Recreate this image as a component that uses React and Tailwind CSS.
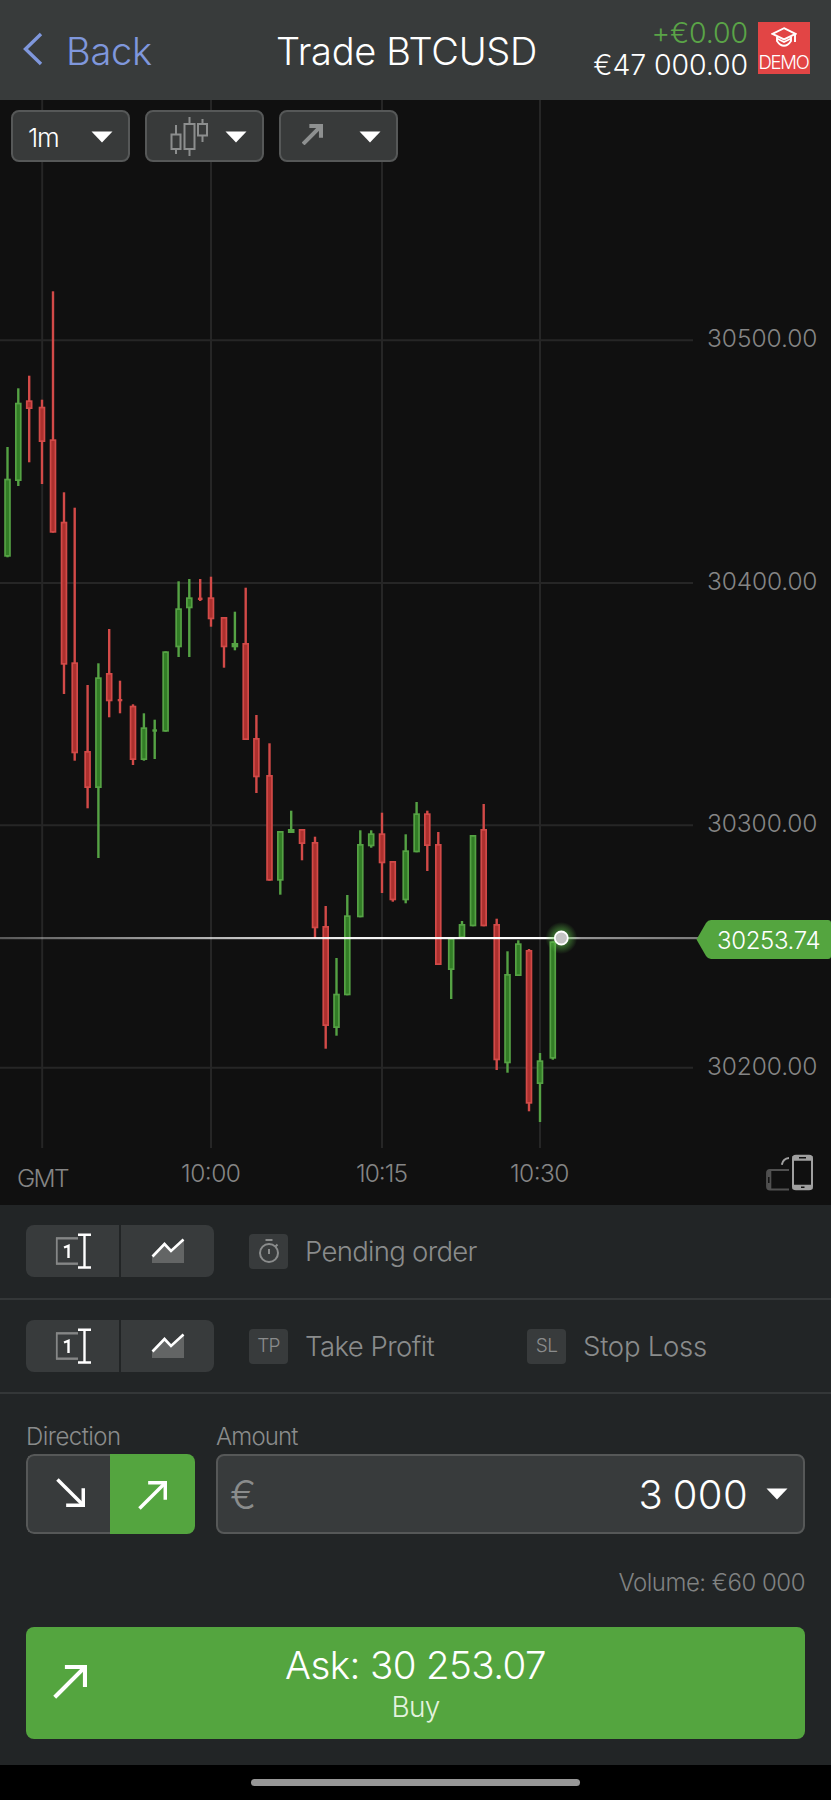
import React from "react";

// x, high, body top, body bottom, low, rising, narrow body
const CANDLES = [
  [7.5, 447, 478.7, 556.7, 557.3, 1],
  [18.3, 388.3, 402.7, 481, 486, 1],
  [29.2, 375.7, 400.3, 409, 462.3, 0],
  [42, 399.7, 406.7, 442, 484, 0],
  [53, 291.3, 439.3, 532.7, 532.7, 0],
  [64, 492.3, 521.7, 664.7, 694, 0],
  [74.7, 507.7, 662.3, 753.3, 760.7, 0],
  [87.6, 685, 751, 788, 808.3, 0],
  [98.4, 663.3, 677.3, 788, 858, 1],
  [109.2, 629, 673, 701.3, 717.3, 0],
  [120, 680.7, 699, 701.3, 713.3, 0, 1],
  [133, 704.3, 705.7, 760, 765, 0],
  [143.9, 713.3, 727.3, 760, 760.7, 1],
  [154.7, 719.7, 729.3, 731.7, 759, 1, 1],
  [165.6, 651.3, 651.3, 731.7, 731.7, 1],
  [178.6, 581.3, 608.3, 647.3, 657, 1],
  [189.3, 579, 597.3, 608.3, 657, 1],
  [200.2, 579, 597.6, 600, 601, 0, 1],
  [211, 576.7, 597.3, 619.3, 626.7, 0],
  [224, 617, 617, 647.3, 667.7, 0],
  [234.9, 611.7, 643, 647.3, 650.3, 1],
  [245.7, 587.7, 643, 740, 740, 0],
  [256.4, 715, 738, 777.3, 793, 0],
  [269.5, 743.3, 775, 880.7, 880.7, 0],
  [280.3, 831, 831, 880.7, 894.7, 1],
  [291.2, 810.7, 829, 833, 833, 1],
  [302, 829, 829, 844, 860.3, 0],
  [315, 836.7, 842, 928.3, 938, 0],
  [325.7, 906, 926, 1026, 1048.7, 0],
  [336.5, 958, 993.7, 1028, 1035.7, 1],
  [347.3, 895, 915.3, 995.3, 995.3, 1],
  [360.3, 830.3, 844, 917.3, 917.3, 1],
  [371.2, 830.3, 833.3, 846.3, 847.7, 1],
  [382, 812.7, 833.3, 863.3, 893, 0],
  [392.8, 861, 861, 900.3, 901.7, 0],
  [405.7, 834.3, 850.3, 900.3, 903.3, 1],
  [416.6, 802, 813.3, 852.3, 852.3, 1],
  [427.3, 810.7, 813.3, 846, 871, 0],
  [438.3, 832, 844, 965, 965, 0],
  [451.2, 938, 938, 970, 999, 1],
  [462, 921, 924, 938, 938, 1],
  [473, 835, 835, 926.3, 926.3, 1],
  [483.7, 804, 829, 926.3, 926.3, 0],
  [496.7, 918.7, 924, 1060.3, 1070, 0],
  [507.5, 951.3, 974, 1063.3, 1072.7, 1],
  [518.3, 940.3, 943.3, 976, 976, 1],
  [529, 949, 950, 1103.7, 1111.3, 0],
  [540, 1053, 1060.3, 1084, 1122, 1],
  [552.8, 941.3, 941.3, 1058.7, 1059.7, 1],
];

const PRICES = [
  [340.3, "30500.00"],
  [583, "30400.00"],
  [825.3, "30300.00"],
  [1067.7, "30200.00"],
];

function Candle({ data }) {
  const [x, high, top, bottom, low, rising, narrow] = data;
  const stroke = rising ? "#55a244" : "#d24a48";
  const fill = rising ? "#327d26" : "#ac302e";
  const w = narrow ? 4.6 : 6.6;
  const bodyH = bottom - top;
  const border = 1.7;
  return (
    <g>
      <rect x={x - 1.2} y={high} width={2.4} height={low - high} fill={stroke} />
      <rect x={x - w / 2} y={top} width={w} height={bodyH} fill={stroke} />
      {bodyH > 5 && (
        <rect x={x - w / 2 + border} y={top + border} width={w - border * 2} height={bodyH - border * 2} fill={fill} />
      )}
    </g>
  );
}

function Chart() {
  return (
    <svg viewBox="0 100 831 1105" width="831" height="1105" className="absolute inset-0 block font-light">
      <defs>
        <linearGradient id="priceLine" gradientUnits="userSpaceOnUse" x1="0" x2="700" y1="0" y2="0">
          <stop offset="0" stopColor="#fff" stopOpacity="0.3" />
          <stop offset="0.5" stopColor="#fff" stopOpacity="0.95" />
          <stop offset="0.79" stopColor="#fff" stopOpacity="1" />
          <stop offset="0.83" stopColor="#fff" stopOpacity="0.55" />
          <stop offset="1" stopColor="#fff" stopOpacity="0.45" />
        </linearGradient>
        <radialGradient id="glow">
          <stop offset="0.35" stopColor="#5fc24a" stopOpacity="0.6" />
          <stop offset="1" stopColor="#5fc24a" stopOpacity="0" />
        </radialGradient>
      </defs>
      <g stroke="#262626" strokeWidth="2">
        {PRICES.map(([y]) => (
          <line key={y} x1="0" x2="693" y1={y} y2={y} />
        ))}
        {[42.2, 211, 382, 540].map((x) => (
          <line key={x} x1={x} x2={x} y1="99" y2="1148" />
        ))}
      </g>
      {CANDLES.map((c) => (
        <Candle key={c[0]} data={c} />
      ))}
      <rect x="0" y="937" width="698" height="2.2" fill="url(#priceLine)" />
      <circle cx="561.3" cy="938" r="16" fill="url(#glow)" />
      <circle cx="561.3" cy="938" r="6.5" fill="#c4c4c4" stroke="#fff" strokeWidth="1.8" />
      <path d="M696.5 939.5 L706 923 Q708 920 711 920 H828 Q831 920 831 923 V956 Q831 959 828 959 H711 Q708 959 706 956 Z" fill="#54a53f" />
      <text x="717" y="948.5" fontSize="24" textLength="103.5" fill="#fff">30253.74</text>
      <g fontSize="24.5" fill="#858585">
        {PRICES.map(([y, label]) => (
          <text key={label} x="707" y={y + 7} textLength="110.500">{label}</text>
        ))}
        <text x="181" y="1182" textLength="60">10:00</text>
        <text x="356" y="1182" textLength="52">10:15</text>
        <text x="510" y="1182" textLength="59.5">10:30</text>
        <text x="17" y="1187.2" textLength="52.500">GMT</text>
      </g>
      <g fill="none" stroke="#a0a0a0">
        <rect x="793" y="1155.8" width="19" height="33.4" rx="3" strokeWidth="2" />
        <path d="M792.5 1158.4 H812.5 M792.5 1187 H812.5" strokeWidth="4.6" />
        <path d="M799 1157.8 H806 M801 1187.3 H804.5" stroke="#111" strokeWidth="1.5" />
        <path d="M781.8 1164.8 Q783 1158.4 789 1158" strokeWidth="2" />
      </g>
      <g fill="none" stroke="#505050" strokeWidth="1.8">
        <path d="M789 1170 H770 Q767 1170 767 1173 V1186.500 Q767 1189.500 770 1189.500 H789" />
        <path d="M769.300 1170 V1189" strokeWidth="4" />
        <path d="M768.8 1177 V1183" stroke="#111" strokeWidth="1.5" />
      </g>
    </svg>
  );
}

function Caret() {
  return (
    <svg width="22" height="12" viewBox="0 0 22 12" className="shrink-0">
      <path d="M0.5 0.5 H21.5 L11 11.500 Z" fill="#fff" />
    </svg>
  );
}

function ArrowUp({ size, weight }) {
  return (
    <svg width={size} height={size} viewBox="0 0 30 30" fill="none" stroke="currentColor" strokeWidth={weight}>
      <path d="M1.500 28.500 L27 3" />
      <path d={`M10.500 ${weight / 2} H${30 - weight / 2} V19.500`} />
    </svg>
  );
}

function ToolButton({ children, className }) {
  return (
    <button className={"flex h-[52px] w-[119px] items-center justify-between rounded-lg border-2 border-[#565858] bg-[#383a3a] pt-0.5 pr-[15px] text-[26px] font-light text-white " + className}>
      {children}
      <Caret />
    </button>
  );
}

function InputModeSwitch() {
  return (
    <div className="flex h-[52px] w-[188px] shrink-0 gap-0.5 overflow-hidden rounded-lg">
      <button className="flex flex-1 items-center justify-center bg-[#383b3c]">
        <svg width="36" height="36" viewBox="0 0 36 36" fill="none">
          <path d="M23 5.500 H1.800 V30.500 H23" stroke="#858787" strokeWidth="1.8" />
          <path d="M23 5 H1 M23 31 H1" stroke="#858787" strokeWidth="1.5" />
          <path d="M9 14.500 L13.500 12.800 V25" stroke="#fff" strokeWidth="2.4" />
          <path d="M23 1.700 H36 M23 34.500 H36 M29.500 1.700 V34.500" stroke="#fff" strokeWidth="2.4" />
        </svg>
      </button>
      <button className="flex flex-1 items-center justify-center bg-[#383b3c]">
        <svg width="34" height="26" viewBox="0 0 34 26" fill="none">
          <path d="M1 18.500 L13.500 6 L20 13 L33 1 V25 H1 Z" fill="#636565" />
          <path d="M1.500 18.500 L13.500 6 L20 13 L32.500 1.500" stroke="#fff" strokeWidth="2.6" />
        </svg>
      </button>
    </div>
  );
}

function Tile({ children }) {
  return (
    <span className="flex h-[35px] w-[39px] shrink-0 items-center justify-center rounded bg-[#383b3c] pt-px text-[19px] font-light text-[#8a8c8c]">
      {children}
    </span>
  );
}

export default function App() {
  return (
    <main className="flex h-[1800px] w-[831px] flex-col overflow-hidden bg-black font-['Inter','Liberation_Sans',sans-serif] font-light whitespace-nowrap">
      <header className="flex h-[100px] shrink-0 items-center bg-[#383b3b] pr-[21px] pl-[23px]">
        <button className="flex w-[253px] items-center pt-0.5 text-[38px] leading-none tracking-[-0.300px] text-[#7f97dc]">
          <svg width="20" height="34" viewBox="0 0 20 34" fill="none" className="mr-[23px] -mt-1">
            <path d="M18 2 L2.500 17 L18 32" stroke="currentColor" strokeWidth="3.4" />
          </svg>
          <span>Back</span>
        </button>
        <h1 className="pt-0.5 text-[38px] leading-none tracking-[-0.300px] text-white">Trade BTCUSD</h1>
        <div className="mr-[10px] mb-[3px] ml-auto text-right text-[28.500px] leading-8 tracking-[-0.100px] text-white">
          <p className="text-[#5aa447]">+€0.00</p>
          <p>€47 000.00</p>
        </div>
        <div className="mb-1 flex h-[52px] w-[52px] shrink-0 flex-col items-center bg-[#e24545] pt-[5px] text-[18.500px] leading-[30px] tracking-[-1.200px] text-white">
          <svg width="26" height="20" viewBox="0 0 26 20" fill="none" stroke="currentColor" strokeWidth="1.9" className="shrink-0">
            <path d="M13 1.200 L24.500 6.800 L13 12.400 L1.500 6.800 Z" />
            <path d="M6 10 V14 C8 17 11 18.800 13 18.800 C15 18.800 18 17 20 14 V10" />
            <path d="M6 11.500 L13 15 L20 11.500" />
            <path d="M24 7 V15" />
          </svg>
          <span className="-ml-px">DEMO</span>
        </div>
      </header>

      <section className="relative h-[1105px] shrink-0 bg-[#101010]">
        <Chart />
        <div className="relative flex gap-[15px] pt-[10px] pl-[11px]">
          <ToolButton className="pl-[15px] tracking-[-1.200px]">
            <span>1m</span>
          </ToolButton>
          <ToolButton className="pl-[23px]">
            <svg width="38" height="40" viewBox="0 0 38 40" fill="none" stroke="#8c8e8e" strokeWidth="2" className="-mt-0.5">
              <path d="M1.500 18.500 H10.500 V33 H1.500 Z M6 9 V18.500 M6 33 V38" />
              <path d="M14.500 8 H24.500 V33 H14.500 Z M19.500 1 V8 M19.500 33 V40" />
              <path d="M28 8 H37 V19.500 H28 Z M32.500 3 V8 M32.500 19.500 V26" />
            </svg>
          </ToolButton>
          <ToolButton className="pl-[21px]">
            <span className="mb-1.5 text-[#8e9090]">
              <ArrowUp size={21} weight={5.800} />
            </span>
          </ToolButton>
        </div>
      </section>

      <section className="flex h-[560px] shrink-0 flex-col bg-[#222526] text-[27.500px] tracking-[-0.700px] text-[#8a8c8c]">
        <div className="flex h-[95px] items-center border-b-2 border-[#343738] px-[26px] pb-[1px]">
          <InputModeSwitch />
          <div className="ml-[35px] flex items-center gap-[17px]">
            <Tile>
              <svg width="22" height="26" viewBox="0 0 22 26" fill="none" stroke="currentColor" strokeWidth="2" className="-mt-0.5">
                <circle cx="11" cy="15" r="9" />
                <path d="M7.500 2 H14.500 M11 11 V16 M17.500 8.500 L19.500 6.500" />
              </svg>
            </Tile>
            <span className="pt-0.5">Pending order</span>
          </div>
        </div>
        <div className="flex h-[94px] items-center border-b-2 border-[#343738] px-[26px]">
          <InputModeSwitch />
          <div className="ml-[35px] flex w-[278px] items-center gap-[17px]">
            <Tile>TP</Tile>
            <span className="pt-0.5 tracking-[-0.550px]">Take Profit</span>
          </div>
          <div className="flex items-center gap-[17px]">
            <Tile>SL</Tile>
            <span className="pt-0.5 tracking-[-0.250px]">Stop Loss</span>
          </div>
        </div>

        <div className="flex gap-[21px] px-[26px] pt-[28px] text-[24px] leading-[30px]">
          <div className="w-[169px]">
            <p className="tracking-[-0.550px]">Direction</p>
            <div className="mt-0.5 flex h-20 overflow-hidden rounded-lg text-white">
              <button className="flex w-[84px] items-center justify-center rounded-l-lg border-2 border-r-0 border-[#565858] bg-[#383b3c] pb-1 pl-0.5">
                <span className="rotate-90">
                  <ArrowUp size={29} weight={3.600} />
                </span>
              </button>
              <button className="flex flex-1 items-center justify-center bg-[#54a53f] pt-0.5">
                <ArrowUp size={29} weight={3.600} />
              </button>
            </div>
          </div>
          <div className="flex-1">
            <p className="tracking-[-0.850px]">Amount</p>
            <div className="mt-0.5 flex h-20 items-center rounded-lg border-2 border-[#565858] bg-[#383b3c] pr-[15px] pl-3 text-[39px]">
              <span className="pt-0.5">€</span>
              <span className="mr-[18px] ml-auto pt-0.5 text-[40px] tracking-[0.400px] [word-spacing:-2px] text-white">3 000</span>
              <Caret />
            </div>
          </div>
        </div>
        <p className="mt-[34px] pr-[26px] text-right text-[24px] leading-[30px] tracking-[-0.500px] text-[#808282]">Volume: €60 000</p>

        <button className="relative mx-[26px] mt-[29px] flex h-[112px] flex-col items-center rounded-lg bg-[#54a53f] pt-4 text-white">
          <span className="absolute top-[38px] left-[27px]">
            <ArrowUp size={34} weight={3.600} />
          </span>
          <span className="text-[38.500px] leading-[44px] tracking-[-0.600px]">Ask: 30 253.07</span>
          <span className="text-[28px] leading-[41px] text-[#e4f3df]">Buy</span>
        </button>
      </section>

      <footer className="flex flex-1 justify-center pt-[14px]">
        <div className="h-[7px] w-[329px] rounded-full bg-[#979797]" />
      </footer>
    </main>
  );
}
